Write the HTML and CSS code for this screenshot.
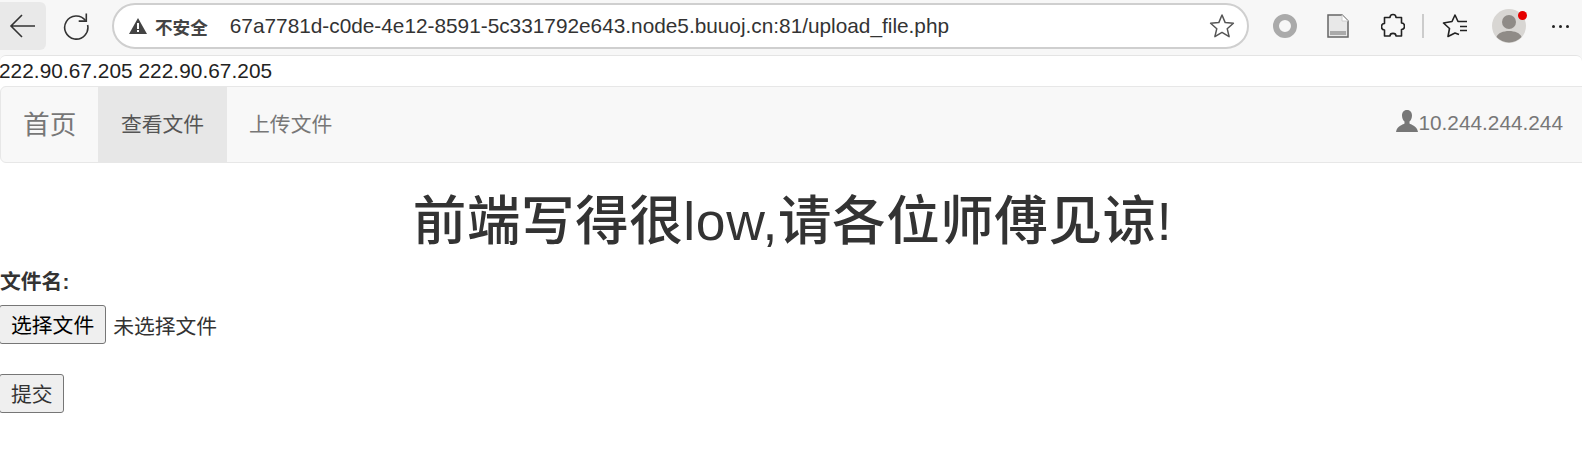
FILE: index.html
```html
<!DOCTYPE html>
<html lang="en">
<head>
  <meta charset="UTF-8">
  <title>upload_file.php</title>
  <link rel="stylesheet" href="styles.css">
</head>
<body>

<!-- Browser toolbar -->
<div class="toolbar">
  <div class="tool-btn back-btn">
    <svg width="28" height="28" viewBox="0 0 28 28"><path d="M26 14H2M13 3 2 14l11 11" fill="none" stroke="#333" stroke-width="1.6"/></svg>
  </div>
  <div class="tool-btn reload-btn">
    <svg width="28" height="28" viewBox="0 0 28 28"><path d="M23.5 8.500A11.600 11.600 0 1 0 25.600 13" fill="none" stroke="#333" stroke-width="1.6"/><path d="M24.300 1.500v7.600h-7.600" fill="none" stroke="#333" stroke-width="1.6"/></svg>
  </div>
  <div class="address-bar">
    <svg class="warn-icon" width="18" height="16" viewBox="0 0 18 16"><path d="M9 0 18 16H0Z" fill="#444"/><path d="M8 5h2v6H8zM8 12h2v2H8z" fill="#fff"/></svg>
    <span class="not-secure">不安全</span>
    <span class="url">67a7781d-c0de-4e12-8591-5c331792e643.node5.buuoj.cn:81/upload_file.php</span>
    <svg class="star-icon" width="26" height="26" viewBox="0 0 26 26"><path d="M13 2l3.200 7.600 8.200.7-6.200 5.400 1.900 8L13 19.400l-7.100 4.300 1.900-8L1.600 10.300l8.200-.7Z" fill="none" stroke="#555" stroke-width="1.5" stroke-linejoin="round"/></svg>
  </div>
  <div class="tool-icons">
    <svg class="ext-ring" width="24" height="24" viewBox="0 0 24 24"><circle cx="12" cy="12" r="9" fill="none" stroke="#aaa" stroke-width="6"/></svg>
    <svg class="ext-doc" width="22" height="24" viewBox="0 0 22 24"><path d="M1 1h14l6 6v16H1Z" fill="#e8e8e8" stroke="#666" stroke-width="1.500"/><path d="M15 1v6h6" fill="#fff" stroke="#ccc"/><path d="M3 17h16v4H3Z" fill="#aaa"/></svg>
    <svg class="ext-puzzle" width="24" height="26" viewBox="0 0 24 26"><path d="M9 4.500C9 .5 15 .5 15 4.500h5.500V10c4 0 4 6.500 0 6.500V23H15c0-3.500-6-3.500-6 0H3.500v-6C-.5 17-.5 10.500 3.500 10.500v-6Z" fill="none" stroke="#222" stroke-width="1.600" stroke-linejoin="round"/></svg>
    <div class="tool-sep"></div>
    <svg class="fav-icon" width="26" height="26" viewBox="0 0 26 26"><path d="M25 8.500H16L13 2 10 8.500 1.500 10l6 5.500L6 23.500l7-3.500 4 1.500" fill="none" stroke="#222" stroke-width="1.600" stroke-linejoin="round"/><path d="M18 13.500h7M18 17.500h7" fill="none" stroke="#222" stroke-width="1.600"/></svg>
    <div class="avatar">
      <svg width="34" height="34" viewBox="0 0 34 34"><circle cx="17" cy="17" r="17" fill="#d8d6d3"/><circle cx="17" cy="13" r="7" fill="#8f8b87"/><path d="M4.500 28C7 20 27 20 29.500 28A17 17 0 0 1 4.500 28Z" fill="#8f8b87"/></svg>
      <div class="avatar-dot"></div>
    </div>
    <div class="more-btn"><i></i><i></i><i></i></div>
  </div>
</div>

<!-- Page -->
<div class="page">
  <div class="ip-line">222.90.67.205 222.90.67.205</div>

  <div class="navbar">
    <a class="brand">首页</a>
    <a class="nav-link active">查看文件</a>
    <a class="nav-link">上传文件</a>
    <div class="nav-user">
      <svg width="22" height="22" viewBox="0 0 22 22"><path d="M11 0c3.500 0 5 2.500 5 5.500 0 2.500-1 5-2.500 6v2c1 1 7.500 2 8.500 8.500H0C1 15.500 7.500 14.500 8.500 13.500v-2C7 10.500 6 8 6 5.500 6 2.500 7.500 0 11 0Z" fill="#777"/></svg>
      <span>10.244.244.244</span>
    </div>
  </div>

  <h1 class="title">前端写得很low,请各位师傅见谅!</h1>

  <form class="upload-form">
    <label class="file-label">文件名:</label>
    <div class="file-row">
      <button type="button" class="form-btn">选择文件</button>
      <span class="file-status">未选择文件</span>
    </div>
    <button type="button" class="form-btn submit-btn">提交</button>
  </form>
</div>

</body>
</html>
```

FILE: styles.css
```css
body {
  margin: 0;
  height: 468px;
  overflow: hidden;
  background: #f7f7f7;
  font-family: "Liberation Sans", "Noto Sans CJK SC", sans-serif;
  font-size: 20.8px;
  color: #333;
}

/* Browser toolbar */
.toolbar {
  display: flex;
  align-items: center;
  height: 55px;
  box-sizing: border-box;
  padding-bottom: 3px;
}

.tool-btn {
  display: flex;
  align-items: center;
  justify-content: center;
  height: 48px;
}

.back-btn {
  width: 46px;
  background: #e9e9e9;
  border-radius: 0 6px 6px 0;
}

.reload-btn {
  width: 28px;
  margin-left: 16px;
}

.address-bar {
  display: flex;
  align-items: center;
  width: 1137px;
  height: 46px;
  box-sizing: border-box;
  margin-left: 22px;
  padding: 0 12px 0 15px;
  background: #fff;
  border: 2px solid #cfcfcf;
  border-radius: 23px;
}

.not-secure {
  margin-left: 8px;
  font-size: 17.6px;
  font-weight: bold;
  color: #444;
}

.url {
  flex: 1;
  margin-left: 22px;
  font-size: 20.8px;
  color: #333;
  white-space: nowrap;
}

.tool-icons {
  display: flex;
  align-items: center;
  margin-left: 24px;
}

.ext-doc { margin-left: 30px; }
.ext-puzzle { margin-left: 32px; }
.fav-icon { margin-left: 18px; }

.tool-sep {
  width: 2px;
  height: 24px;
  margin-left: 17px;
  background: #ccc;
}

.avatar {
  position: relative;
  width: 34px;
  height: 34px;
  margin-left: 24px;
}

.avatar-dot {
  position: absolute;
  top: 2px;
  right: -1px;
  width: 9px;
  height: 9px;
  background: #e60000;
  border-radius: 50%;
}

.more-btn {
  display: flex;
  gap: 4px;
  margin-left: 26px;
}

.more-btn i {
  width: 3px;
  height: 3px;
  background: #222;
  border-radius: 50%;
}

/* Page */
.page {
  height: 412px;
  background: #fff;
  border-top: 1px solid #e4e4e4;
  border-radius: 6px 6px 0 0;
}

.ip-line {
  height: 30px;
  margin-left: -1px;
  line-height: 29px;
  letter-spacing: .05px;
  color: #222;
}

.navbar {
  display: flex;
  align-items: stretch;
  height: 77px;
  box-sizing: border-box;
  margin-right: -8px;
  padding-right: 8px;
  background: #f8f8f8;
  border: 1px solid #e7e7e7;
  border-radius: 6px;
  color: #777;
}

.brand {
  display: flex;
  align-items: center;
  padding: 0 22px 4px;
  font-size: 26.7px;
}

.nav-link {
  display: flex;
  align-items: center;
  padding: 0 22.5px 4px;
}

.nav-link.active {
  background: #e7e7e7;
  color: #555;
}

.nav-user {
  display: flex;
  align-items: center;
  margin-left: auto;
  padding: 0 18px 3px 0;
}

.nav-user svg {
  margin-bottom: 4px;
}

.title {
  margin: 20px 0 0;
  padding-left: 3px;
  font-size: 53.5px;
  font-weight: 500;
  line-height: 77px;
  letter-spacing: .6px;
  text-align: center;
  color: #333;
}

.upload-form {
  margin-top: 7px;
}

.file-label {
  display: block;
  height: 38px;
  line-height: 30px;
  font-weight: bold;
}

.file-row {
  display: flex;
  align-items: center;
  gap: 7px;
  margin-bottom: 30px;
}

.form-btn {
  display: block;
  height: 39px;
  margin-left: -1px;
  padding: 2px 11px 0;
  background: #efefef;
  border: 1px solid #767676;
  border-radius: 3px;
  font-family: inherit;
  font-size: 20.8px;
  line-height: 34px;
  color: #000;
}

.submit-btn {
  padding-right: 10px;
  color: #333;
}

.file-status {
  margin-top: 1px;
  color: #333;
}
```
